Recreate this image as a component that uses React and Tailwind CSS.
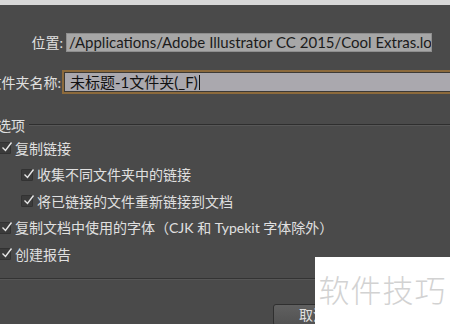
import React from 'react';

// 对话框局部：位置、文件夹名称、选项复选框
const font = "font-['Lato','Noto_Sans_CJK_SC',sans-serif]";

function Check({ label, nested }) {
  return (
    <div className={`flex h-[26.5px] items-center ${nested ? 'pl-[21px]' : '-ml-[1px]'}`}>
      <span className="relative h-[12px] w-[12px] shrink-0 rounded-[1px] border border-[#323232] bg-[#3b3b3b]">
        <svg viewBox="0 0 12 12" className="absolute -top-[2px] left-[1px] h-[12px] w-[12px]">
          <path d="M1.5 6.5 L4.5 9.5 L10.5 1.5" fill="none" stroke="#e6e6e6" strokeWidth="1.4" />
        </svg>
      </span>
      <span className="ml-[4px] whitespace-nowrap text-[14px] text-[#e0e0e0]">{label}</span>
    </div>
  );
}

export default function App() {
  return (
    <div className={`relative h-[324px] w-[450px] overflow-hidden bg-[#4a4a4a] ${font}`}>
      <div className="h-[5px] bg-[#d8d8d8]" />

      {/* 位置 */}
      <div className="mt-[28px] flex h-[19px] items-center">
        <div className="flex w-[63px] justify-end whitespace-nowrap text-[14px] text-[#e0e0e0]">位置:</div>
        <div className="ml-[3px] flex h-[19px] w-[366px] shrink-0 items-center overflow-hidden border border-[#8e8e8e] bg-[#a7a7a7] pl-[2px] text-[15px] whitespace-nowrap text-[#1b1b1b]">
          /Applications/Adobe Illustrator CC 2015/Cool Extras.localized
        </div>
      </div>

      {/* 文件夹名称 */}
      <div className="mt-[18px] flex h-[24px] items-center">
        <div className="flex w-[61px] shrink-0 justify-end whitespace-nowrap text-[14px] text-[#e0e0e0]">文件夹名称:</div>
        <div className="ml-[1px] h-[24px] w-[420px] shrink-0 border-2 border-[#8c6a3c] bg-[#3d3a36] p-px">
          <div className="flex h-full items-center bg-[#aaa8ae] pl-[5px] text-[15px] text-[#111]">
            未标题-1文件夹(_F)
            <span className="ml-px h-[15px] w-px bg-[#111]" />
          </div>
        </div>
      </div>

      {/* 选项 */}
      <div className="mt-[22px] flex h-[18px] items-center">
        <span className="-ml-[3px] whitespace-nowrap text-[14px] text-[#e0e0e0]">选项</span>
        <div className="ml-[4px] flex-1 border-t border-b border-t-[#2e2e2e] border-b-[#575757]" />
      </div>

      <div className="mt-[1px]">
        <Check label="复制链接" />
        <Check nested label="收集不同文件夹中的链接" />
        <Check nested label="将已链接的文件重新链接到文档" />
        <Check label="复制文档中使用的字体（CJK 和 Typekit 字体除外）" />
        <Check label="创建报告" />
      </div>

      <div className="mt-[10px] border-t border-b border-t-[#333] border-b-[#565656]" />

      <div className="mt-[24px] flex pl-[273px]">
        <div className="flex h-[22px] w-[80px] items-center justify-center rounded-[3px] border border-[#2f2f2f] bg-gradient-to-b from-[#606060] to-[#525252] text-[14px] text-[#e0e0e0]">
          取消
        </div>
      </div>

      {/* 水印 */}
      <div className="absolute left-[315px] top-[257px] flex h-[67px] w-[135px] items-center justify-center bg-white">
        <span className="mt-[-3px] text-[31px] tracking-[1px] text-[#d2d2d2] font-['Noto_Sans_CJK_SC',sans-serif] font-light">软件技巧</span>
      </div>
    </div>
  );
}
